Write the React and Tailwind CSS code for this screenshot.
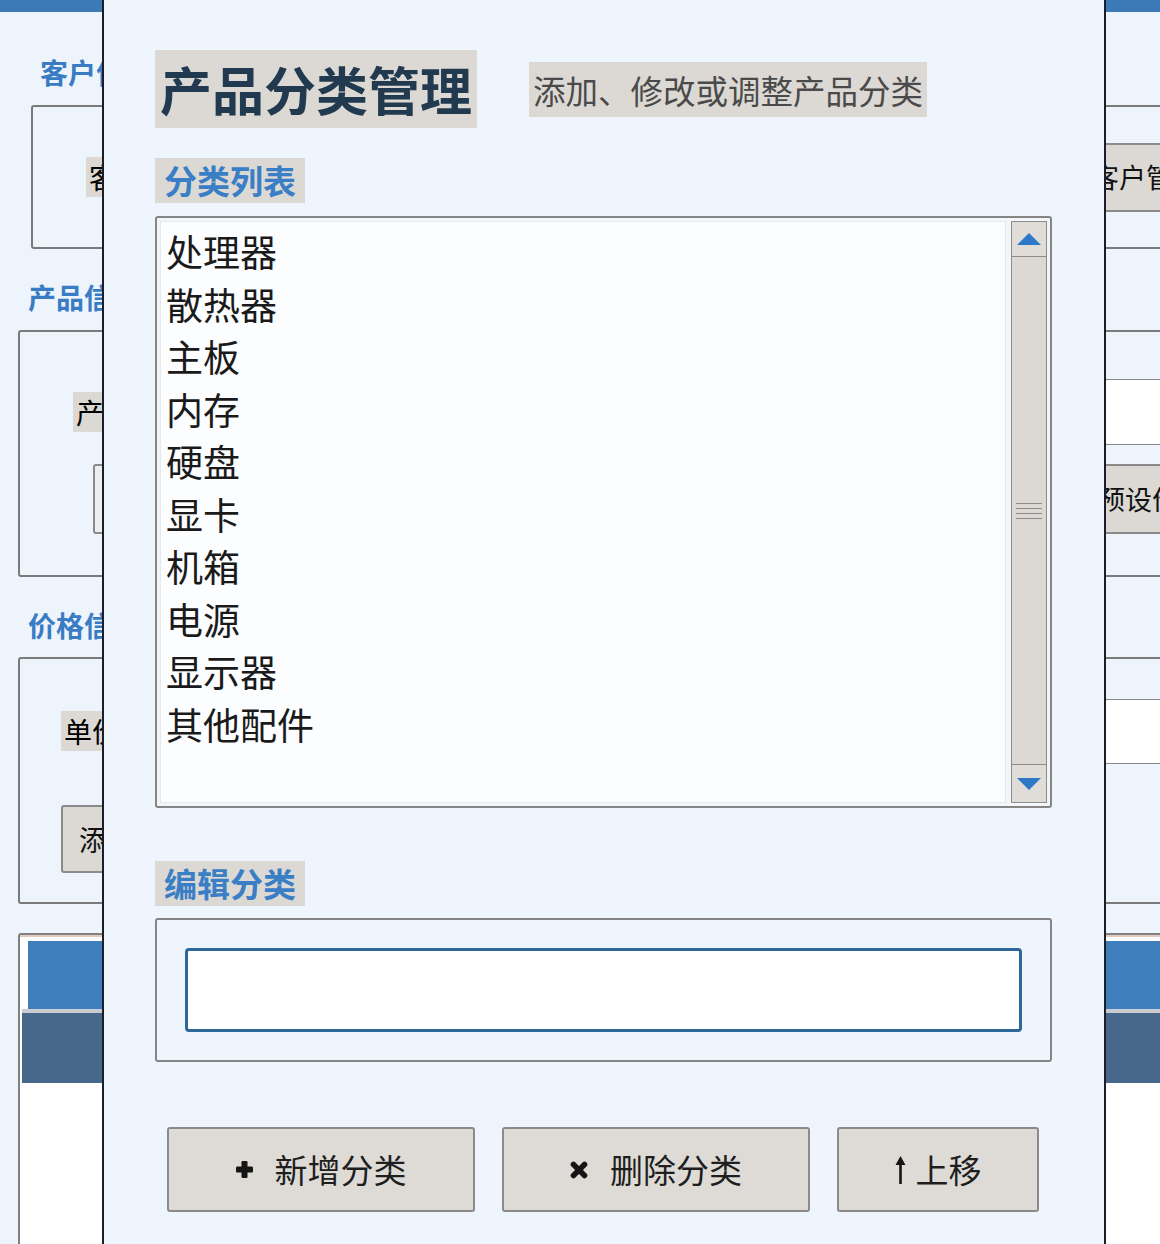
const categories = ["处理器", "散热器", "主板", "内存", "硬盘", "显卡", "机箱", "电源", "显示器", "其他配件"];

const PlusIcon = () => (
  <svg width="17" height="17" viewBox="0 0 17 17" fill="#151515">
    <rect x="5.5" y="0" width="6" height="17" rx="1.2" />
    <rect x="0" y="5.5" width="17" height="6" rx="1.2" />
  </svg>
);

const CrossIcon = () => (
  <svg width="18" height="18" viewBox="0 0 18 18" stroke="#151515" strokeWidth="5.5" strokeLinecap="round">
    <line x1="3.5" y1="3.5" x2="14.5" y2="14.5" />
    <line x1="14.5" y1="3.5" x2="3.5" y2="14.5" />
  </svg>
);

const ArrowUpIcon = () => (
  <svg width="11" height="28" viewBox="0 0 11 28" fill="#151515">
    <path d="M5.5 0 L10.5 9 L6.8 9 L6.8 28 L4.2 28 L4.2 9 L0.5 9 Z" />
  </svg>
);

const Triangle = ({ down }) => (
  <svg width="24" height="12" viewBox="0 0 24 12" fill="#2e78c8">
    {down ? <path d="M0 0 L24 0 L12 12 Z" /> : <path d="M12 0 L24 12 L0 12 Z" />}
  </svg>
);

const SectionLabel = ({ children }) => (
  <div className="w-fit bg-[#dcd9d4] px-[9px] text-[33px] font-bold leading-[45px] text-[#3a7ec6]">{children}</div>
);

const ActionButton = ({ icon, label, width, gap }) => (
  <button
    type="button"
    className={`flex h-[85px] ${width} items-center justify-center ${gap} rounded-[3px] border-2 border-[#8a8a8a] bg-[#dedbd6] text-[33px] leading-none text-[#1e1e1e]`}
  >
    {icon}
    <span>{label}</span>
  </button>
);

export default function App() {
  return (
    <div className="relative h-[1244px] w-[1160px] overflow-hidden bg-[#edf4fc] font-['Noto_Sans_CJK_SC','Noto_Sans',sans-serif]">
      {/* background window */}
      <div className="h-[12px] bg-[#3b79b7]" />

      <div className="ml-[40px] mt-[43px] text-[28px] font-bold leading-[34px] text-[#3a7cc4]">客户信息</div>
      <div className="ml-[31px] mt-[16px] flex h-[144px] w-[1200px] items-center rounded-[3px] border-2 border-[#7a7a7a]">
        <div className="w-[1049px]">
          <span className="ml-[53px] whitespace-nowrap bg-[#dcd9d4] px-[3px] text-[28px] leading-[40px] text-black">客户</span>
        </div>
        <div className="flex h-[69px] items-center whitespace-nowrap rounded-[3px] border-2 border-[#8a8a8a] bg-[#dcd9d4] px-[8px] text-[27px] text-[#111]">
          客户管理
        </div>
      </div>

      <div className="ml-[28px] mt-[31px] text-[28px] font-bold leading-[34px] text-[#3a7cc4]">产品信息</div>
      <div className="ml-[18px] mt-[16px] flex h-[247px] w-[1200px] flex-col gap-[19px] rounded-[3px] border-2 border-[#7a7a7a] pt-[47px]">
        <div className="flex h-[66px] items-center">
          <div className="w-[1040px]">
            <span className="ml-[53px] whitespace-nowrap bg-[#dcd9d4] px-[3px] text-[28px] leading-[38px] text-black">产品</span>
          </div>
          <div className="h-[66px] w-[300px] border border-[#888] bg-white" />
        </div>
        <div className="flex h-[70px] items-center">
          <div className="w-[1073px]">
            <div className="ml-[73px] h-[70px] w-[200px] rounded-[3px] border-2 border-[#8a8a8a] bg-[#eceef0]" />
          </div>
          <div className="flex h-[70px] items-center whitespace-nowrap rounded-[3px] border-2 border-[#8a8a8a] bg-[#dcd9d4] px-[8px] text-[27px] text-[#111]">
            预设价格
          </div>
        </div>
      </div>

      <div className="ml-[28px] mt-[31px] text-[28px] font-bold leading-[34px] text-[#3a7cc4]">价格信息</div>
      <div className="ml-[18px] mt-[15px] flex h-[247px] w-[1200px] flex-col gap-[41px] rounded-[3px] border-2 border-[#7a7a7a] pt-[40px]">
        <div className="flex h-[65px] items-center">
          <div className="w-[1040px]">
            <span className="ml-[41px] whitespace-nowrap bg-[#dcd9d4] px-[3px] text-[28px] leading-[41px] text-black">单价</span>
          </div>
          <div className="h-[65px] w-[300px] border border-[#888] bg-white" />
        </div>
        <div className="ml-[41px] flex h-[68px] w-[200px] items-center whitespace-nowrap rounded-[3px] border-2 border-[#8a8a8a] bg-[#dcd9d4] px-[16px] text-[28px] text-[#111]">
          添加
        </div>
      </div>

      <div className="ml-[18px] mt-[29px] h-[400px] w-[1200px] rounded-[3px] border-2 border-[#808080] bg-white">
        <div className="border-t-2 border-[#e3c9c0] pl-[2px] pt-[4px]">
          <div className="ml-[6px] h-[68px] bg-[#3e7ebd]" />
          <div className="h-[4px] bg-[#c9cdd2]" />
          <div className="h-[70px] bg-[#47678b]" />
        </div>
      </div>

      {/* dialog */}
      <div className="absolute left-[102px] top-0 h-[1260px] w-[1004px] border-2 border-t-0 border-[#1b1e29] bg-[#eef5fd] pl-[51px] pt-[50px]">
        <div className="flex items-center">
          <div className="bg-[#dcd9d4] px-[5px] text-[52px] font-bold leading-[78px] text-[#223a50]">产品分类管理</div>
          <div className="ml-[52px] bg-[#dcd9d4] px-[4px] text-[32.5px] leading-[55px] text-[#4a4a4a]">添加、修改或调整产品分类</div>
        </div>

        <div className="mt-[30px]">
          <SectionLabel>分类列表</SectionLabel>
        </div>

        <div className="mt-[13px] flex h-[592px] w-[897px] rounded-[3px] border-2 border-[#858585] bg-[#f3f6f9] p-[3px]">
          <div className="flex-1 border border-[#e4e9ef] bg-[#fcfdff] pl-[5px] pt-[3px]">
            {categories.map((c) => (
              <div key={c} className="text-[37px] leading-[52.5px] text-[#1a1a1a]">
                {c}
              </div>
            ))}
          </div>
          <div className="ml-[5px] flex w-[36px] flex-col border border-[#8c8c8c] bg-[#dcd9d4]">
            <div className="flex h-[35px] items-center justify-center border-b border-[#8c8c8c] bg-[#e0ddd8]">
              <Triangle />
            </div>
            <div className="flex flex-1 flex-col items-center justify-center gap-[4px]">
              <div className="h-px w-[26px] bg-[#8a8a8a]" />
              <div className="h-px w-[26px] bg-[#8a8a8a]" />
              <div className="h-px w-[26px] bg-[#8a8a8a]" />
              <div className="h-px w-[26px] bg-[#8a8a8a]" />
            </div>
            <div className="flex h-[38px] items-center justify-center border-t border-[#8c8c8c] bg-[#e0ddd8]">
              <Triangle down />
            </div>
          </div>
        </div>

        <div className="mt-[53px]">
          <SectionLabel>编辑分类</SectionLabel>
        </div>

        <div className="mt-[12px] w-[897px] rounded-[3px] border-2 border-[#858585] p-[28px]">
          <input
            type="text"
            className="block h-[84px] w-full rounded-[4px] border-[3px] border-[#2d6699] bg-white px-3 text-[33px] outline-none"
          />
        </div>

        <div className="mt-[65px] flex gap-[27px] pl-[12px]">
          <ActionButton icon={<PlusIcon />} label="新增分类" width="w-[308px]" gap="gap-[22px]" />
          <ActionButton icon={<CrossIcon />} label="删除分类" width="w-[308px]" gap="gap-[22px]" />
          <ActionButton icon={<ArrowUpIcon />} label="上移" width="w-[202px]" gap="gap-[10px]" />
        </div>
      </div>
    </div>
  );
}
